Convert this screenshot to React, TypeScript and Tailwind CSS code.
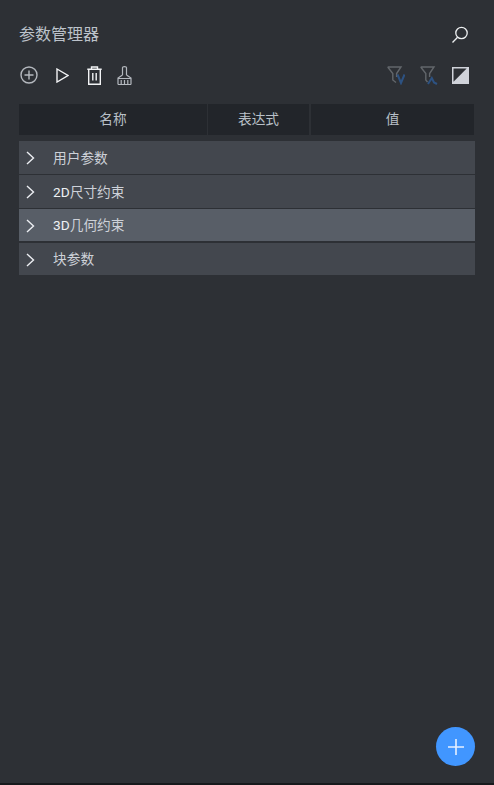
function Chevron() {
  return (
    <svg width="10" height="14" viewBox="0 0 10 14" fill="none" stroke="#eceef2" strokeWidth="1.4" className="shrink-0">
      <path d="M1 1 L7.5 7 L1 13" />
    </svg>
  );
}
function Row({ prefix, label, bg, h, mb }: { prefix?: string; label: string; bg: string; h: string; mb: string }) {
  return (
    <div className={`flex items-center pl-[7px] pt-[1px] text-[13.7px] text-[#cdd1d8] ${bg} ${h} ${mb}`}>
      <Chevron />
      <span className="ml-[17px]">
        {prefix ? <span className="text-[#eef0f3]">{prefix}</span> : null}
        {label}
      </span>
    </div>
  );
}
export default function App() {
  return (
    <div className="relative flex h-[785px] w-[494px] flex-col overflow-hidden bg-[#2d3035] font-['Roboto','Noto_Sans_CJK_SC',sans-serif]">
      <div className="flex h-[70px] items-center justify-between pl-[19px] pr-[25px]">
        <span className="text-[16px] leading-none text-[#bcc2ca]">参数管理器</span>
        <svg width="18" height="18" viewBox="0 0 18 18" fill="none" stroke="#eceef0" strokeWidth="1.3">
          <circle cx="10.5" cy="7" r="5.7" />
          <path d="M6.6 11.2 L1.5 16.5" />
        </svg>
      </div>
      <div className="-mt-[7px] flex h-[24px] items-center justify-between pl-[20px] pr-[25px]">
        <div className="flex items-center">
          <svg width="18" height="18" viewBox="0 0 18 18" fill="none" stroke="#b4b8be" strokeWidth="1.4">
            <circle cx="9" cy="9" r="8" />
            <path d="M9 4.5 V13.5 M4.5 9 H13.5" />
          </svg>
          <svg width="13" height="15" viewBox="0 0 13 15" fill="none" stroke="#f2f3f5" strokeWidth="1.4" className="ml-[18px]">
            <path d="M1 1 L12 7.5 L1 14 Z" />
          </svg>
          <svg width="15" height="19" viewBox="0 0 15 19" fill="none" stroke="#f2f3f5" strokeWidth="1.4" className="ml-[18px]">
            <path d="M0.3 3.3 H14.7 M4.5 3.3 V1 H10.5 V3.3 M1.7 3.3 V18.2 H13.3 V3.3 M5.8 7 V14.5 M9.2 7 V14.5" />
          </svg>
          <svg width="15" height="19" viewBox="0 0 15 19" fill="none" stroke="#b4b8be" strokeWidth="1.2" className="ml-[15px]">
            <path d="M5.5 9 V1.5 Q5.5 0.6 7.5 0.6 Q9.5 0.6 9.5 1.5 V9 M5.5 9 L1 12 V18.5 M9.5 9 L14 12 V18.5 M1 12.5 H14 M1 18.5 H14 M4.2 14 V18.5 M7.5 14 V18.5 M10.8 14 V18.5" />
          </svg>
        </div>
        <div className="flex items-center">
          <svg width="18" height="19" viewBox="0 0 18 19" fill="none" strokeWidth="1.4">
            <path d="M0.7 1 H14 L9.6 7.5 V11 M0.7 1 L5.8 7.5 V14 L9 16.5" stroke="#62666b" />
            <path d="M10.5 8.5 L14 17 L17.5 8.5" stroke="#2d5282" strokeWidth="2" />
          </svg>
          <svg width="18" height="19" viewBox="0 0 18 19" fill="none" strokeWidth="1.4" className="ml-[15px]">
            <path d="M0.7 1 H14 L9.6 7.5 V11 M0.7 1 L5.8 7.5 V14 L7.5 16" stroke="#62666b" />
            <path d="M8 18 L11.8 12 L14 16.5 L17 18" stroke="#2d5282" strokeWidth="2" />
          </svg>
          <svg width="17" height="17" viewBox="0 0 17 17" className="ml-[14px]">
            <rect x="0" y="0" width="17" height="17" fill="#d0d3da" />
            <path d="M1.5 14.7 L14.7 1.5 H1.5 Z" fill="#2d3035" />
          </svg>
        </div>
      </div>
      <div className="ml-[19px] mr-[20px] mt-[17px] flex h-[31px] gap-[1px] text-[13.7px] text-[#b9c0c8]">
        <div className="flex w-[188px] items-center justify-center bg-[#22252a]">名称</div>
        <div className="flex w-[101px] items-center justify-center bg-[#22252a]">表达式</div>
        <div className="ml-[1px] flex flex-1 items-center justify-center bg-[#22252a]">值</div>
      </div>
      <div className="ml-[19px] mr-[19px] mt-[6px] flex flex-col">
        <Row label="用户参数" bg="bg-[#43474e]" h="h-[33px]" mb="mb-[1px]" />
        <Row prefix="2D" label="尺寸约束" bg="bg-[#43474e]" h="h-[33px]" mb="mb-[1px]" />
        <Row prefix="3D" label="几何约束" bg="bg-[#585e67]" h="h-[32px]" mb="mb-[2px]" />
        <Row label="块参数" bg="bg-[#43474e]" h="h-[32px]" mb="mb-0" />
      </div>
      <div className="flex-1" />
      <div className="mb-[17px] mr-[19px] flex justify-end">
        <button className="flex h-[39px] w-[39px] items-center justify-center rounded-full bg-[#4196ff]">
          <svg width="16" height="16" viewBox="0 0 16 16" stroke="#e6f0ff" strokeWidth="1.6" fill="none">
            <path d="M8 0 V16 M0 8 H16" />
          </svg>
        </button>
      </div>
      <div className="h-[2px] bg-[#17191c]" />
    </div>
  );
}
